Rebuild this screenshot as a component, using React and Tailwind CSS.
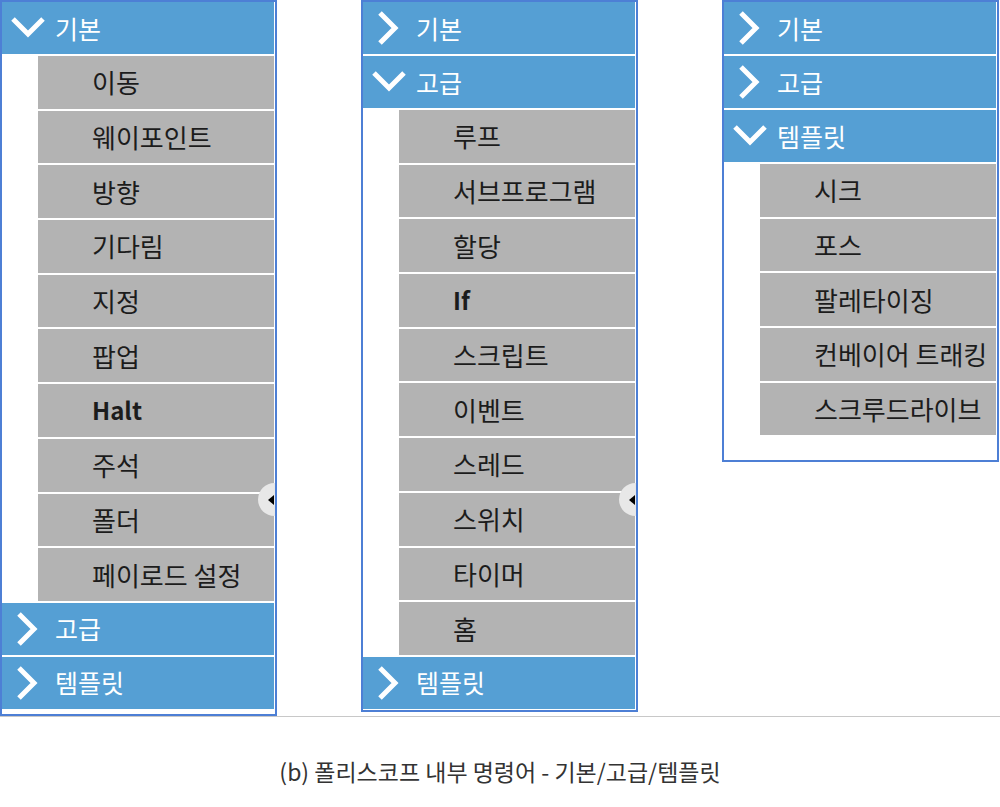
const KR = { fontFamily: '"Noto Sans CJK KR", "Noto Sans", sans-serif' };

const panels = [
  {
    groups: [
      {
        title: "기본",
        open: true,
        items: ["이동", "웨이포인트", "방향", "기다림", "지정", "팝업", "Halt", "주석", "폴더", "페이로드 설정"],
      },
      { title: "고급" },
      { title: "템플릿" },
    ],
    bottom: "pb-[5px]",
    grip: true,
  },
  {
    groups: [
      { title: "기본" },
      {
        title: "고급",
        open: true,
        items: ["루프", "서브프로그램", "할당", "If", "스크립트", "이벤트", "스레드", "스위치", "타이머", "홈"],
      },
      { title: "템플릿" },
    ],
    bottom: "pb-[1px]",
    grip: true,
  },
  {
    groups: [
      { title: "기본" },
      { title: "고급" },
      {
        title: "템플릿",
        open: true,
        items: ["시크", "포스", "팔레타이징", "컨베이어 트래킹", "스크루드라이브"],
      },
    ],
    bottom: "pb-[25px]",
  },
];

function ChevronDown() {
  return (
    <svg width="36" height="24" viewBox="0 0 36 24" className="shrink-0">
      <polyline points="3,3 18,18 33,3" fill="none" stroke="white" strokeWidth="5" strokeLinejoin="miter" />
    </svg>
  );
}

function ChevronRight() {
  return (
    <svg width="24" height="36" viewBox="0 0 24 36" className="shrink-0">
      <polyline points="4,3 19,18 4,33" fill="none" stroke="white" strokeWidth="5" strokeLinejoin="miter" />
    </svg>
  );
}

function Header({ title, open }) {
  return (
    <div className="h-[52px] bg-[#559fd4] flex items-center relative">
      {open ? (
        <div className="w-[53px] pl-[8px]">
          <ChevronDown />
        </div>
      ) : (
        <div className="w-[53px] pl-[13px]">
          <ChevronRight />
        </div>
      )}
      <span className="text-[25px] text-white leading-none" style={KR}>
        {title}
      </span>
    </div>
  );
}

function Item({ label }) {
  const latin = /^[A-Za-z]+$/.test(label);
  return (
    <div className="ml-[36px] h-[52.7px] bg-[#b3b3b3] flex items-center pl-[54px]">
      <span
        className={
          "leading-none text-[#1c1c1c] whitespace-nowrap " + (latin ? "font-bold text-[24px]" : "text-[26px]")
        }
        style={KR}
      >
        {label}
      </span>
    </div>
  );
}

function Panel({ groups, bottom, grip }) {
  return (
    <div className={"w-[277px] border-2 border-[#4d7fd5] pr-[1px] bg-white relative flex flex-col gap-[2px] " + bottom}>
      {groups.map((g) => (
        <div key={g.title} className="flex flex-col gap-[2px]">
          <Header title={g.title} open={g.open} />
          {g.open &&
            g.items.map((it) => <Item key={it} label={it} />)}
        </div>
      ))}
      {grip && (
        <div className="absolute left-[256px] top-[481px] w-[17px] h-[33px] rounded-l-full bg-[#e8e8e8] flex items-center justify-end">
          <div className="w-0 h-0 border-y-[5px] border-y-transparent border-r-[6px] border-r-black mr-[1px]" />
        </div>
      )}
    </div>
  );
}

export default function App() {
  return (
    <div className="w-[1000px] h-[807px] bg-white overflow-hidden">
      <div className="h-[716px] flex items-start gap-[84px]">
        {panels.map((p, i) => (
          <Panel key={i} {...p} />
        ))}
      </div>
      <div className="h-[1px] bg-[#c8c8c8]" />
      <div className="mt-[43px] text-center text-[23px] text-[#333333] leading-none" style={KR}>
        (b) 폴리스코프 내부 명령어 - 기본/고급/템플릿
      </div>
    </div>
  );
}
